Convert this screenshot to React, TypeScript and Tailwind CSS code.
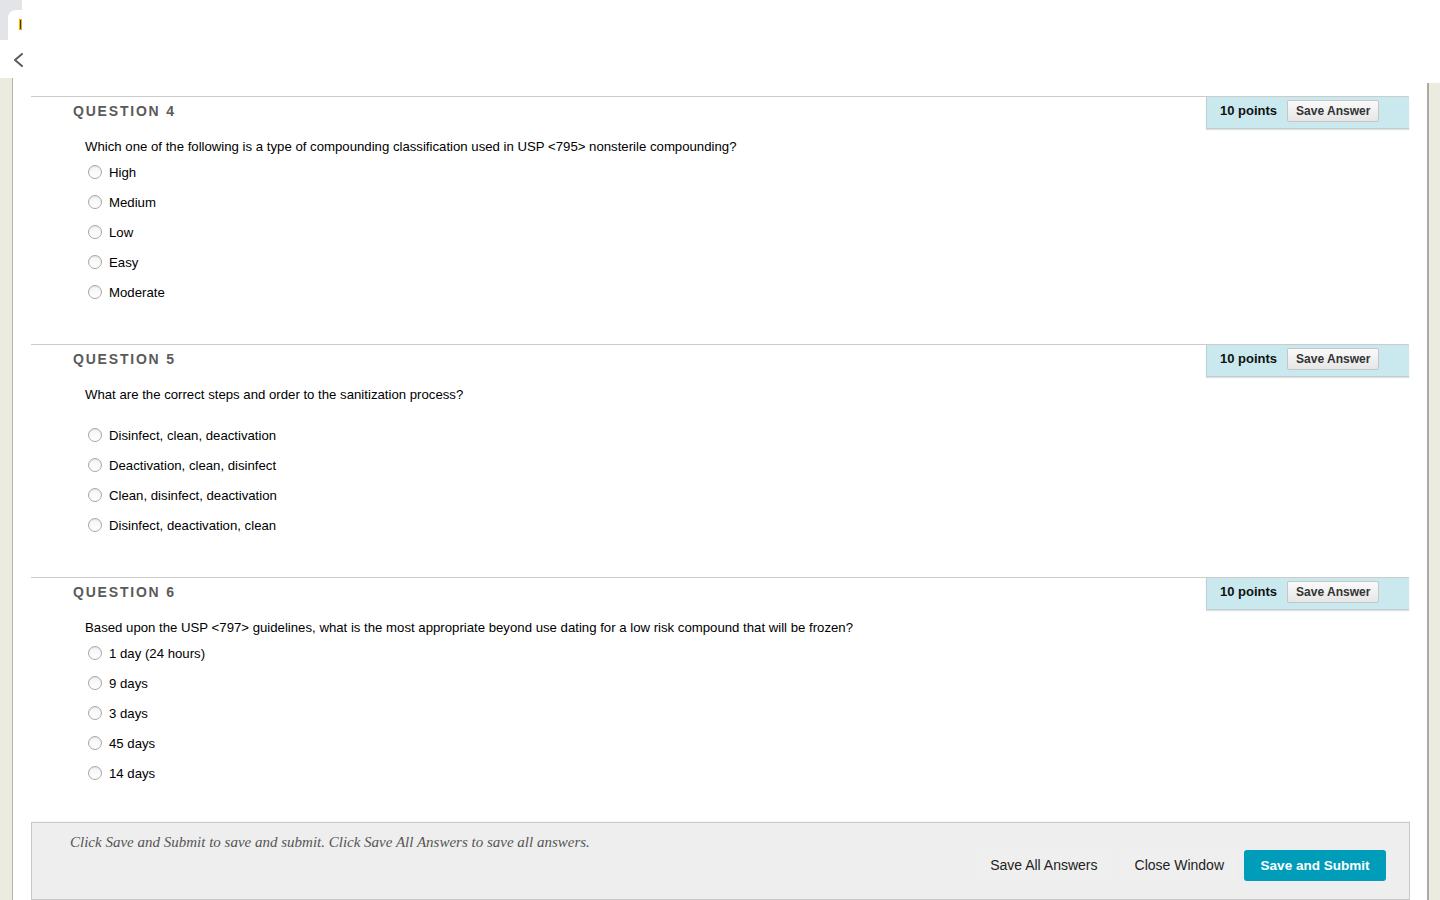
import React from "react";

type Q = { n: number; text: string; options: string[]; spacer?: boolean };

const questions: Q[] = [
  {
    n: 4,
    text: "Which one of the following is a type of compounding classification used in USP <795> nonsterile compounding?",
    options: ["High", "Medium", "Low", "Easy", "Moderate"],
  },
  {
    n: 5,
    text: "What are the correct steps and order to the sanitization process?",
    options: [
      "Disinfect, clean, deactivation",
      "Deactivation, clean, disinfect",
      "Clean, disinfect, deactivation",
      "Disinfect, deactivation, clean",
    ],
    spacer: true,
  },
  {
    n: 6,
    text: "Based upon the USP <797> guidelines, what is the most appropriate beyond use dating for a low risk compound that will be frozen?",
    options: ["1 day (24 hours)", "9 days", "3 days", "45 days", "14 days"],
  },
];

function Radio() {
  return (
    <span className="block w-[14px] h-[14px] rounded-full border border-[#a8a8a8] bg-gradient-to-b from-[#f4f4f4] to-white shadow-[inset_0_1px_1px_rgba(0,0,0,0.08)] -mt-[3px]" />
  );
}

function Question({ q }: { q: Q }) {
  return (
    <div className="border-t border-[#cccccc] pb-[36px]">
      <div className="flex items-start justify-between">
        <div className="pl-[42px] pt-[6px] text-[14px] leading-[16px] font-bold tracking-[1.8px] text-[#5a5a5a]">
          QUESTION {q.n}
        </div>
        <div className="h-[32px] w-[203px] bg-[#c9e9ee] border-b border-l border-[#bfcfd2] shadow-[0_1px_1px_rgba(0,0,0,0.12)] flex items-start pl-[13px] pt-[3px] gap-[10px]">
          <span className="text-[13px] leading-[22px] font-bold text-[#111]">10 points</span>
          <button className="h-[22px] px-[8px] text-[12px] leading-[20px] font-bold text-[#333] border border-[#c6c6c6] rounded-[2px] bg-gradient-to-b from-[#fafafa] to-[#e6e6e6]">
            Save Answer
          </button>
        </div>
      </div>
      <div className="pl-[54px] mt-[10px] text-[13.2px] leading-[16px] text-black">{q.text}</div>
      {q.spacer && <div className="h-[15px]" />}
      <div className="mt-[3px] pl-[57px]">
        {q.options.map((o) => (
          <div key={o} className="h-[30px] flex items-center gap-[7px]">
            <Radio />
            <span className="text-[13.2px] leading-[16px] text-black">{o}</span>
          </div>
        ))}
      </div>
    </div>
  );
}

export default function App() {
  return (
    <div className="relative w-[1440px] h-[900px] overflow-hidden bg-white flex font-['Liberation_Sans',Arial,Helvetica,sans-serif]">
      {/* left strip */}
      <div className="w-[13px] shrink-0 flex flex-col">
        <div className="h-[78px] shrink-0" />
        <div className="flex-1 bg-[#ecebdf] border-r border-[#b5b5b0]" />
      </div>

      {/* browser chrome pieces */}
      <div className="absolute left-0 top-0 w-[22px] h-[40px] bg-[#e2e4e8] rounded-br-[6px]">
        <div className="absolute left-[8px] top-[10px] w-[14px] h-[30px] bg-white rounded-tl-[8px]" />
        <div className="absolute left-[19px] top-[19px] w-[3px] h-[11px] bg-[#333] border border-[#f0b400]" />
      </div>
      <svg className="absolute left-[12px] top-[52px]" width="12" height="16" viewBox="0 0 12 16">
        <path d="M10 2 L3 8 L10 14" fill="none" stroke="#5b5b5b" strokeWidth="2" strokeLinecap="round" strokeLinejoin="round" />
      </svg>

      {/* main */}
      <div className="flex-1 flex flex-col pt-[96px] px-[18px]">
        {questions.map((q) => (
          <Question key={q.n} q={q} />
        ))}
        <div className="-mt-[3px] h-[120px] -mr-[1px] bg-[#eeeeee] border border-[#c8c8c8] shadow-[0_-1px_1px_rgba(0,0,0,0.04)] pl-[38px] pr-[23px] pt-[10px]">
          <div className="text-[15px] leading-[18px] italic text-[#555] font-['Liberation_Serif',Georgia,serif]">
            Click Save and Submit to save and submit. Click Save All Answers to save all answers.
          </div>
          <div className="flex justify-end items-center mt-[-1px]">
            <button className="h-[31px] px-[14px] text-[14px] leading-[31px] text-[#222] bg-[#efefef]">Save All Answers</button>
            <button className="h-[31px] px-[14px] ml-[9px] text-[14px] leading-[31px] text-[#222] bg-[#efefef]">Close Window</button>
            <button className="h-[31px] w-[142px] ml-[6px] rounded-[3px] bg-[#009dbb] text-white text-[13.5px] leading-[31px] font-bold">
              Save and Submit
            </button>
          </div>
        </div>
      </div>

      {/* right strip */}
      <div className="w-[13px] shrink-0 flex flex-col">
        <div className="h-[83px] shrink-0" />
        <div className="flex-1 bg-[#ecebdf] border-l-2 border-[#a9a9a6]" />
      </div>
    </div>
  );
}
